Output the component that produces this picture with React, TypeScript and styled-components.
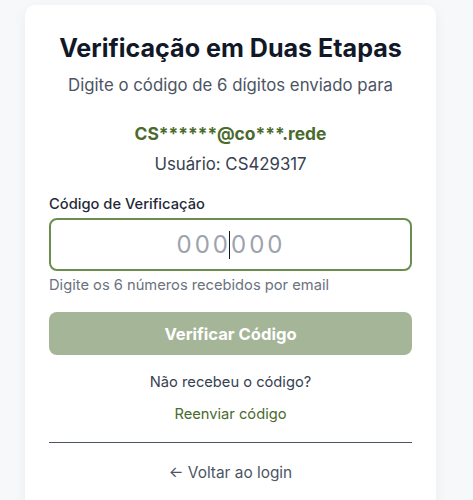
import React from "react";
import styled, { createGlobalStyle } from "styled-components";

const Global = createGlobalStyle`
  html, body { margin: 0; padding: 0; background: #f7f8fa; }
  body { font-family: Inter, "Noto Sans", sans-serif; -webkit-font-smoothing: antialiased; }
`;

const Page = styled.div`
  padding: 5px 0 0 25px;
  height: 495px;
  overflow: hidden;
`;

const Card = styled.div`
  width: 411px;
  box-sizing: border-box;
  background: #ffffff;
  border-radius: 10px;
  box-shadow: 0 4px 14px rgba(0, 0, 0, 0.05);
  padding: 27px 24px 40px;
  display: flex;
  flex-direction: column;
  align-items: stretch;
`;

const Title = styled.h1`
  margin: 0;
  text-align: center;
  font-size: 25.1px;
  line-height: 32px;
  font-weight: 700;
  color: #111827;
`;

const Subtitle = styled.p`
  margin: 9px 0 0;
  text-align: center;
  font-size: 16.8px;
  line-height: 24px;
  color: #4b5563;
`;

const Email = styled.p`
  margin: 25px 0 0;
  text-align: center;
  font-size: 17.4px;
  line-height: 24px;
  font-weight: 700;
  color: #4a6b2c;
`;

const UserLine = styled.p`
  margin: 6px 0 0;
  text-align: center;
  font-size: 16.8px;
  line-height: 24px;
  color: #374151;
`;

const Label = styled.label`
  margin-top: 18px;
  font-size: 14.7px;
  line-height: 20px;
  font-weight: 500;
  color: #1f2937;
`;

const FakeInput = styled.div`
  margin-top: 4px;
  height: 53px;
  box-sizing: border-box;
  border: 2px solid #6b8e4e;
  border-radius: 8px;
  display: flex;
  align-items: center;
  justify-content: center;
  font-size: 24px;
  letter-spacing: 3px;
  color: #9ca3af;
  padding-left: 1px;
`;

const Caret = styled.span`
  display: inline-block;
  width: 1px;
  height: 28px;
  background: #111827;
  margin: 0 1px 0 -2px;
`;

const Help = styled.p`
  margin: 4px 0 0;
  font-size: 14.7px;
  line-height: 20px;
  color: #6b7280;
`;

const Button = styled.button`
  margin-top: 17px;
  height: 43px;
  border: none;
  border-radius: 8px;
  background: #a4b598;
  color: #ffffff;
  font-family: inherit;
  font-size: 16.6px;
  font-weight: 700;
`;

const Question = styled.p`
  margin: 17px 0 0;
  text-align: center;
  font-size: 14.7px;
  line-height: 20px;
  color: #374151;
`;

const Resend = styled.a`
  margin-top: 12px;
  text-align: center;
  font-size: 14.7px;
  line-height: 20px;
  color: #4a6b2c;
`;

const Divider = styled.hr`
  margin: 18px 0 0;
  border: none;
  border-top: 1px solid #4b5563;
`;

const Back = styled.a`
  margin-top: 19px;
  text-align: center;
  font-size: 15.4px;
  line-height: 22px;
  color: #4b5563;
`;

export default function App() {
  return (
    <>
      <Global />
      <Page>
        <Card>
          <Title>Verificação em Duas Etapas</Title>
          <Subtitle>Digite o código de 6 dígitos enviado para</Subtitle>
          <Email>CS******@co***.rede</Email>
          <UserLine>Usuário: CS429317</UserLine>
          <Label>Código de Verificação</Label>
          <FakeInput>
            <span>000</span>
            <Caret />
            <span>000</span>
          </FakeInput>
          <Help>Digite os 6 números recebidos por email</Help>
          <Button>Verificar Código</Button>
          <Question>Não recebeu o código?</Question>
          <Resend>Reenviar código</Resend>
          <Divider />
          <Back>← Voltar ao login</Back>
        </Card>
      </Page>
    </>
  );
}
